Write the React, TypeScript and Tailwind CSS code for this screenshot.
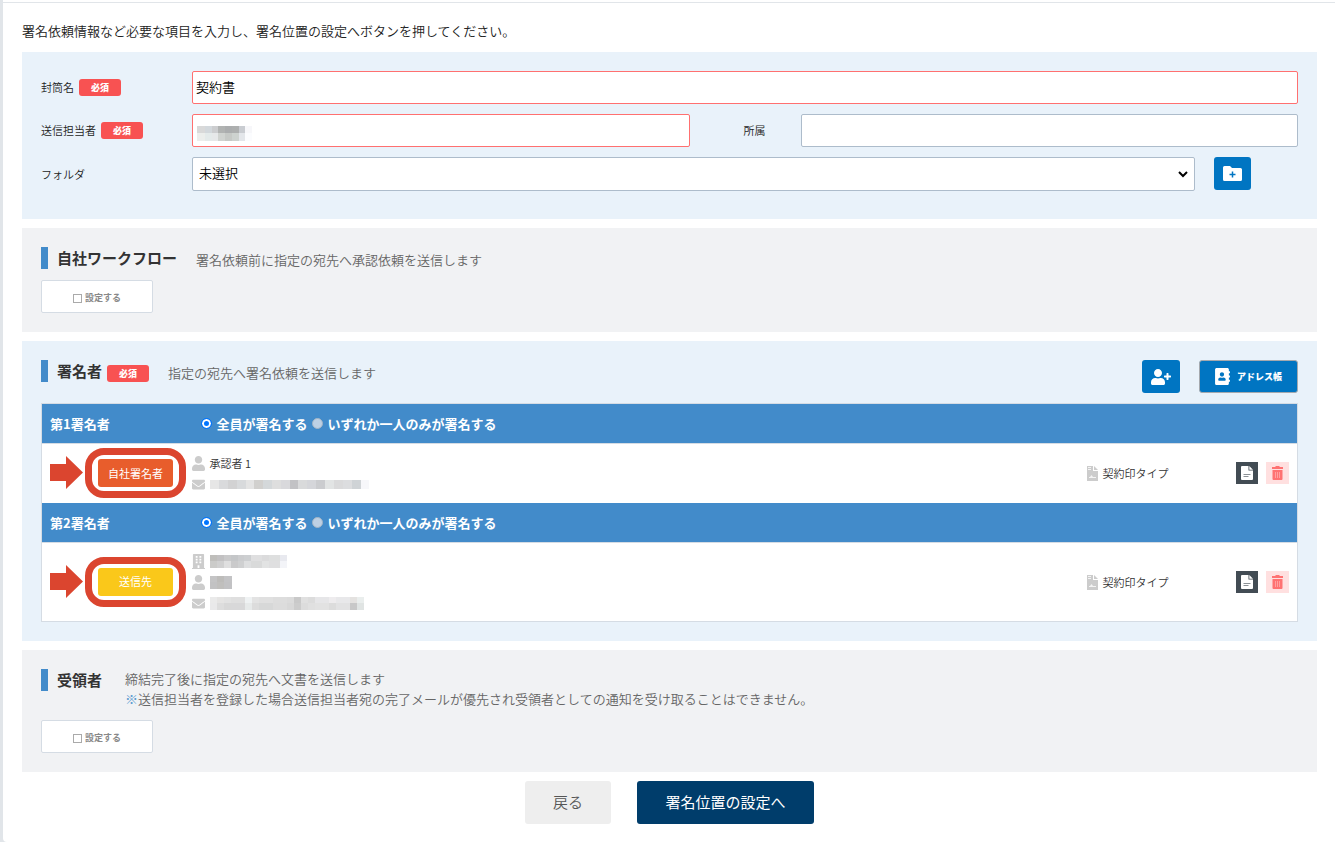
import type { ReactNode } from 'react';
import { FaAddressBook, FaBuilding, FaEnvelope, FaUser, FaUserPlus } from 'react-icons/fa';

interface Cell {
  w: number;
  top: string;
  bottom: string;
}

interface Contact {
  kind: 'company' | 'person' | 'mail';
  text?: string;
  cells?: Cell[];
  maskHeight?: number;
}

interface Signer {
  id: number;
  title: string;
  badge: string;
  badgeClass: string;
  contacts: Contact[];
}

const c = (w: number, top: string, bottom: string): Cell => ({ w, top, bottom });

const senderMask = [
  c(8, '#d9d9d9', '#eceeec'),
  c(7, '#d3d8dc', '#e4eaea'),
  c(6, '#cccdcf', '#e6e8e9'),
  c(7, '#b1b3b2', '#d0d3d0'),
  c(7, '#abadae', '#c6c9c6'),
  c(7, '#adafaf', '#cdd2cf'),
  c(6, '#c9ccd1', '#e3e6ea'),
  c(7, '#f7f7fa', '#fbfcfe'),
];

const signers: Signer[] = [
  {
    id: 1,
    title: '第1署名者',
    badge: '自社署名者',
    badgeClass: 'bg-[#e85d2c]',
    contacts: [
      { kind: 'person', text: '承認者 1' },
      {
        kind: 'mail',
        maskHeight: 9,
        cells: [
          c(9, '#e6e6e6', '#e6e6e6'), c(9, '#d9dadc', '#d9dadc'), c(9, '#d2d2d3', '#d2d2d3'), c(9, '#d8dadc', '#d8dadc'),
          c(8, '#e4e4e4', '#e4e4e4'), c(9, '#d1d0ce', '#d1d0ce'), c(9, '#d4d8da', '#d4d8da'), c(9, '#dedede', '#dedede'),
          c(9, '#d9d9dc', '#d9d9dc'), c(8, '#c2c2c5', '#c2c2c5'), c(9, '#d9dadb', '#d9dadb'), c(9, '#d5d6da', '#d5d6da'),
          c(9, '#cbcccf', '#cbcccf'), c(9, '#e2e4e4', '#e2e4e4'), c(9, '#dadadb', '#dadadb'), c(9, '#dcdddf', '#dcdddf'),
          c(9, '#cfd3d6', '#cfd3d6'), c(8, '#f7f7fa', '#f7f7fa'),
        ],
      },
    ],
  },
  {
    id: 2,
    title: '第2署名者',
    badge: '送信先',
    badgeClass: 'bg-[#fac81a]',
    contacts: [
      {
        kind: 'company',
        cells: [
          c(7, '#bfbebb', '#cbcbc9'), c(7, '#c2c1c2', '#d0d0d0'), c(7, '#c9c9ca', '#dfdfdf'), c(7, '#c4c6c8', '#cacacb'),
          c(6, '#cbccce', '#cfd0d1'), c(7, '#cdcfd1', '#dedfe0'), c(11, '#dfdfe0', '#d9dada'), c(7, '#dbdbdc', '#e2e3e3'),
          c(11, '#dedfdf', '#dfdfe0'), c(7, '#e8e9ef', '#f3f4f8'),
        ],
      },
      { kind: 'person', cells: [c(7, '#c4c4c5', '#c2c2c3'), c(7, '#bdbcba', '#c0bfbd'), c(8, '#c3c3c5', '#c2c2c4')] },
      {
        kind: 'mail',
        cells: [
          c(7, '#eaeaea', '#e9e9ea'), c(7, '#e5e4e3', '#dddddd'), c(7, '#e2e2e2', '#d8d8d8'), c(14, '#dfdfdf', '#d8d8d9'),
          c(7, '#eff2f3', '#e7eaea'), c(7, '#e3e3e3', '#dcdcdc'), c(14, '#e0e0e0', '#d7d8d8'), c(14, '#dddddd', '#dcdcdc'),
          c(7, '#dbdbdb', '#d8d8d8'), c(7, '#c9c9c9', '#cccccc'), c(7, '#e0e0e0', '#dcdcdc'), c(7, '#dcdcdc', '#e0e0e0'),
          c(14, '#e6e6e8', '#e2e2e2'), c(7, '#eeecee', '#dcdcdc'), c(14, '#e8e8ea', '#e2e2e3'), c(7, '#e4e2e0', '#c8c8c8'),
          c(7, '#eaeeed', '#e0e4e3'),
        ],
      },
    ],
  },
];

function Mask({ cells, height = 13 }: { cells: Cell[]; height?: number }) {
  const total = cells.reduce((sum, cell) => sum + cell.w, 0);
  const half = Math.floor(height / 2);
  let x = 0;
  return (
    <svg width={total} height={height} shapeRendering="crispEdges" aria-hidden="true">
      {cells.map((cell, i) => {
        const left = x;
        x += cell.w;
        return (
          <g key={i}>
            <rect x={left} y={0} width={cell.w} height={half} fill={cell.top} />
            <rect x={left} y={half} width={cell.w} height={height - half} fill={cell.bottom} />
          </g>
        );
      })}
    </svg>
  );
}

function Required() {
  return (
    <span className="inline-flex h-[17px] w-[42px] shrink-0 items-center justify-center rounded-[3px] bg-[#f85252] text-[9px] font-black text-white">
      必須
    </span>
  );
}

function Section({ tone, children }: { tone: 'blue' | 'gray'; children: ReactNode }) {
  return <section className={`mb-[9px] p-[19px] ${tone === 'blue' ? 'bg-[#e9f2fa]' : 'bg-[#f1f2f4]'}`}>{children}</section>;
}

function Heading({ children }: { children: ReactNode }) {
  return (
    <h2 className="flex h-[22px] shrink-0 items-center border-l-7 border-[#428bca] pl-[9px] text-[15px] font-bold text-[#333]">
      {children}
    </h2>
  );
}

function EnableBox({ id }: { id: string }) {
  return (
    <label
      htmlFor={id}
      className="mt-[9px] flex h-[33px] w-28 items-center justify-center gap-[3px] rounded-[2px] border border-[#d5dce4] bg-white pt-[3px] text-[9px] font-bold text-[#888]"
    >
      <input id={id} type="checkbox" className="size-[9px] appearance-none border border-[#aaa] bg-white checked:bg-[#428bca]" />
      設定する
    </label>
  );
}

function Arrow() {
  return (
    <svg width="33" height="33" viewBox="0 0 33 33" className="shrink-0" aria-hidden="true">
      <path d="M0 8h16V0l17 16.500L16 33v-8H0z" fill="#db452f" />
    </svg>
  );
}

function ContactIcon({ kind }: { kind: Contact['kind'] }) {
  if (kind === 'company') return <FaBuilding className="h-[15px] w-[13px]" />;
  if (kind === 'person') return <FaUser className="h-[15px] w-[13px]" preserveAspectRatio="none" />;
  return <FaEnvelope className="size-[13px]" />;
}

function StampTypeIcon() {
  return (
    <svg width="11" height="15" viewBox="0 0 11 15" fill="#ccc" aria-hidden="true">
      <path d="M0 0h6v5h5v10H0zM7 0l4 4H7z" />
      <path d="M1 1.500h3M1 3.500h3M2 11.500h7" fill="none" stroke="#f4f4f4" />
      <path d="M3 11l1.500-2 1.500 2z" fill="#f4f4f4" />
    </svg>
  );
}

function FolderPlusIcon() {
  return (
    <svg width="19" height="15" viewBox="0 0 19 15" aria-hidden="true">
      <path d="M1.500 0h5.500l2 2h8.500A1.500 1.500 0 0 1 19 3.500v10a1.500 1.500 0 0 1-1.500 1.500h-16A1.500 1.500 0 0 1 0 13.500v-12A1.500 1.500 0 0 1 1.500 0z" fill="#fff" />
      <path d="M9.500 5.500v6M6.500 8.500h6" stroke="#0075c2" strokeWidth="1.500" />
    </svg>
  );
}

function DocIcon() {
  return (
    <svg width="12" height="14" viewBox="0 0 12 14" aria-hidden="true">
      <path d="M1 0h6.500v4.500H12V13a1 1 0 0 1-1 1H1a1 1 0 0 1-1-1V1a1 1 0 0 1 1-1zM8.300 0L12 3.700H8.300z" fill="#fff" />
      <path d="M2.500 8.500h7M2.500 10.500h5" stroke="#8b9196" />
    </svg>
  );
}

function TrashIcon() {
  return (
    <svg width="11" height="14" viewBox="0 0 11 14" aria-hidden="true">
      <path d="M0 1h3L4 0h3l1 1h3v2H0zM.5 4h10v9a1 1 0 0 1-1 1h-8a1 1 0 0 1-1-1z" fill="#ff7272" />
      <path d="M3.500 6v6M5.500 6v6M7.500 6v6" stroke="#ffa0a0" />
    </svg>
  );
}

function SignerRow({ signer }: { signer: Signer }) {
  const name = `rule-${signer.id}`;
  return (
    <>
      <tr className="h-10 border-b border-[#d5dce4] bg-[#428bca] text-[13px] text-white">
        <th scope="rowgroup" className="pl-2 text-left font-bold">{signer.title}</th>
        <td colSpan={3} className="font-bold">
          <div className="flex items-center pl-[9px]">
            <input
              id={`${name}-all`}
              type="radio"
              name={name}
              defaultChecked
              className="mr-[5px] size-[11px] appearance-none rounded-full border border-[#a3b5c6] bg-[#bdd0e4] checked:border-[#0075ff] checked:bg-[#0075ff] checked:inset-ring-2 checked:inset-ring-white"
            />
            <label htmlFor={`${name}-all`} className="mr-1">全員が署名する</label>
            <input
              id={`${name}-any`}
              type="radio"
              name={name}
              className="mr-[5px] size-[11px] appearance-none rounded-full border border-[#a3b5c6] bg-[#bdd0e4] checked:border-[#0075ff] checked:bg-[#0075ff] checked:inset-ring-2 checked:inset-ring-white"
            />
            <label htmlFor={`${name}-any`}>いずれか一人のみが署名する</label>
          </div>
        </td>
      </tr>
      <tr className="h-[59px] bg-white text-[11px] text-[#333]">
        <td className="pb-px pl-2">
          <div className="flex items-center gap-[2px]">
            <Arrow />
            <span className="flex h-[50px] w-[101px] shrink-0 items-center justify-center rounded-[19px] border-7 border-[#db452f]">
              <span className={`flex h-7 w-[75px] items-center justify-center rounded-[3px] font-normal text-white ${signer.badgeClass}`}>
                {signer.badge}
              </span>
            </span>
          </div>
        </td>
        <td className="pt-2 pb-[7px]">
          <ul>
            {signer.contacts.map((contact) => (
              <li key={contact.kind} className="flex h-[21px] items-center gap-[5px]">
                <span className="flex w-[13px] text-[#ccc]"><ContactIcon kind={contact.kind} /></span>
                {contact.text}
                {contact.cells && <Mask cells={contact.cells} height={contact.maskHeight} />}
              </li>
            ))}
          </ul>
        </td>
        <td>
          <span className="flex items-center gap-[5px]"><StampTypeIcon />契約印タイプ</span>
        </td>
        <td>
          <div className="flex gap-2">
            <button type="button" aria-label="文書" className="flex size-[22px] items-center justify-center bg-[#424c54]"><DocIcon /></button>
            <button type="button" aria-label="削除" className="flex h-[22px] w-[23px] items-center justify-center bg-[#ffe0e0]"><TrashIcon /></button>
          </div>
        </td>
      </tr>
    </>
  );
}

export default function App() {
  return (
    <div className="min-h-screen bg-[#e1e5e9] pl-[3px] font-['Noto_Sans_CJK_JP',sans-serif] font-[350]">
      <main className="min-h-screen rounded-bl-sm bg-white">
        <div className="h-[3px] border-b border-[#e1e5e9]" />
        <div className="pr-[18px] pl-[19px]">
          <p className="pt-[18px] pb-3 text-[13px] leading-[19px] text-[#222]">
            署名依頼情報など必要な項目を入力し、署名位置の設定へボタンを押してください。
          </p>

          <Section tone="blue">
            <div className="grid grid-cols-[151px_1fr_111px_1fr] items-center gap-y-[10px] pb-[9px] text-[11px] text-[#222]">
              <div className="flex items-center gap-[5px]">
                <label htmlFor="envelope">封筒名</label>
                <Required />
              </div>
              <input
                id="envelope"
                defaultValue="契約書"
                className="col-span-3 h-[33px] rounded-[2px] border border-[#ff7070] bg-white px-[3px] pb-[3px] text-[13px] text-black"
              />

              <div className="flex items-center gap-[5px]">
                <label htmlFor="sender">送信担当者</label>
                <Required />
              </div>
              <div className="relative">
                <input id="sender" className="h-[33px] w-full rounded-[2px] border border-[#ff7070] bg-white px-[3px] text-[13px]" />
                <div className="pointer-events-none absolute top-3 left-[5px]"><Mask cells={senderMask} height={15} /></div>
              </div>
              <label htmlFor="department" className="pl-[54px]">所属</label>
              <input id="department" className="h-[33px] rounded-[2px] border border-[#adbccb] bg-white px-[3px] text-[13px]" />

              <label htmlFor="folder">フォルダ</label>
              <div className="col-span-3 flex items-start">
                <div className="relative flex-1">
                  <select
                    id="folder"
                    className="h-[34px] w-full appearance-none rounded-[2px] border border-[#adbccb] bg-white px-[6px] pb-[2px] text-[13px] text-black"
                  >
                    <option>未選択</option>
                  </select>
                  <svg width="10" height="7" viewBox="0 0 10 7" className="pointer-events-none absolute top-[14px] right-[7px]" aria-hidden="true">
                    <path d="M1 1l4 4 4-4" fill="none" stroke="#000" strokeWidth="2" />
                  </svg>
                </div>
                <button
                  type="button"
                  aria-label="フォルダを追加"
                  className="mr-[47px] ml-[19px] flex h-[33px] w-[37px] items-center justify-center rounded-[3px] bg-[#0075c2]"
                >
                  <FolderPlusIcon />
                </button>
              </div>
            </div>
          </Section>

          <Section tone="gray">
            <div className="flex min-h-6 items-start gap-[19px]">
              <Heading>自社ワークフロー</Heading>
              <p className="pt-[2px] text-[13px] leading-[21px] text-[#666]">署名依頼前に指定の宛先へ承認依頼を送信します</p>
            </div>
            <EnableBox id="workflow" />
          </Section>

          <Section tone="blue">
            <div className="mb-[10px] flex h-[33px] items-start gap-[19px]">
              <div className="flex items-end gap-[5px]">
                <Heading>署名者</Heading>
                <Required />
              </div>
              <p className="flex-1 pt-[2px] text-[13px] leading-[21px] text-[#666]">指定の宛先へ署名依頼を送信します</p>
              <button
                type="button"
                aria-label="署名者を追加"
                className="flex h-[33px] w-[38px] items-center justify-center rounded-[3px] bg-[#0075c2] text-white"
              >
                <FaUserPlus className="size-5" />
              </button>
              <button
                type="button"
                className="flex h-[33px] w-[99px] items-center justify-center gap-[7px] rounded-[3px] border border-[#a5a9ae] bg-[#0075c2] text-[9px] font-black text-white"
              >
                <FaAddressBook className="h-[17px] w-[15px]" />
                アドレス帳
              </button>
            </div>
            <table className="w-full table-fixed border-collapse border border-[#d5dce4]">
              <colgroup>
                <col className="w-[150px]" />
                <col />
                <col className="w-[149px]" />
                <col className="w-[62px]" />
              </colgroup>
              <tbody>
                {signers.map((signer) => (
                  <SignerRow key={signer.id} signer={signer} />
                ))}
              </tbody>
            </table>
          </Section>

          <Section tone="gray">
            <div className="flex min-h-[42px] items-start gap-[23px]">
              <Heading>受領者</Heading>
              <p className="text-[13px] leading-5 text-[#666]">
                締結完了後に指定の宛先へ文書を送信します
                <br />
                <span className="text-[#5b9bd0]">※</span>送信担当者を登録した場合送信担当者宛の完了メールが優先され受領者としての通知を受け取ることはできません。
              </p>
            </div>
            <EnableBox id="recipient" />
          </Section>

          <div className="flex justify-center gap-[26px] pb-[18px] text-[15px]">
            <button type="button" className="h-[43px] w-[86px] rounded-[3px] bg-[#eee] text-[#555]">戻る</button>
            <button type="button" className="h-[43px] w-[177px] rounded-[3px] bg-[#003d6b] font-normal text-white">署名位置の設定へ</button>
          </div>
        </div>
      </main>
    </div>
  );
}
